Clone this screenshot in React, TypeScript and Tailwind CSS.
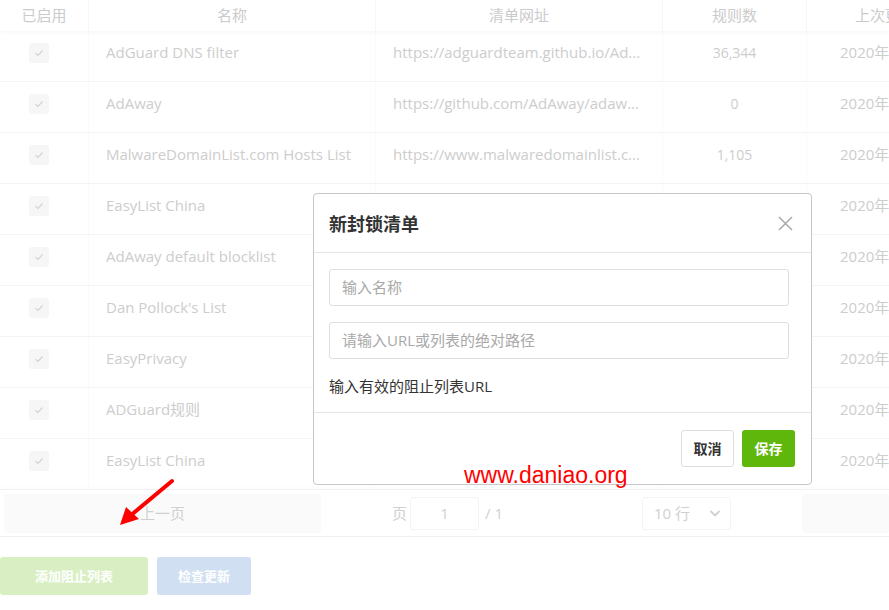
import React from 'react';

const rows = [
    { name: 'AdGuard DNS filter', url: 'https://adguardteam.github.io/Ad...', count: '36,344' },
    { name: 'AdAway', url: 'https://github.com/AdAway/adaw...', count: '0' },
    { name: 'MalwareDomainList.com Hosts List', url: 'https://www.malwaredomainlist.c...', count: '1,105' },
    { name: 'EasyList China', url: '', count: '' },
    { name: 'AdAway default blocklist', url: '', count: '' },
    { name: "Dan Pollock's List", url: '', count: '' },
    { name: 'EasyPrivacy', url: '', count: '' },
    { name: 'ADGuard规则', url: '', count: '' },
    { name: 'EasyList China', url: '', count: '' },
];

const font = { fontFamily: '"Open Sans", "Noto Sans CJK SC", sans-serif' };
const cjk = { fontFamily: '"Noto Sans CJK SC", sans-serif' };

const Check = () => (
    <div className="w-5 h-5 rounded-[3px] bg-[#f6f6f6] flex items-center justify-center">
        <svg width="12" height="12" viewBox="0 0 12 12" fill="none">
            <path d="M2.5 6.2 L5 8.5 L9.5 3.5" stroke="#d4d4d4" strokeWidth="1.2" />
        </svg>
    </div>
);

export default function App() {
    return (
        <div className="relative w-[889px] h-[610px] overflow-hidden bg-white" style={font}>
            {/* table header */}
            <div className="grid grid-cols-[89px_287px_287px_144px_1fr] h-[31px] bg-white shadow-[0_2px_4px_rgba(0,0,0,0.03)] relative z-10 text-[15px] text-[#cbcbcb]" style={cjk}>
                <div className="flex items-center justify-center border-r border-[#f7f7f7]">已启用</div>
                <div className="flex items-center justify-center border-r border-[#f7f7f7]">名称</div>
                <div className="flex items-center justify-center border-r border-[#f7f7f7]">清单网址</div>
                <div className="flex items-center justify-center border-r border-[#f7f7f7]">规则数</div>
                <div className="flex items-center pl-[48px] whitespace-nowrap">上次更新</div>
            </div>
            {rows.map((r, i) => (
                <div key={i} className="grid grid-cols-[89px_287px_287px_144px_1fr] h-[51px] border-b border-[#f3f3f3] text-[15px] text-[#cdcdcd]">
                    <div className="flex items-center pl-[29px] pb-[7px] border-r border-[#fafafa]"><Check /></div>
                    <div className="flex items-center pl-[17px] pb-[7px] whitespace-nowrap border-r border-[#fafafa]">{r.name}</div>
                    <div className="flex items-center pl-[17px] pb-[7px] whitespace-nowrap border-r border-[#fafafa]">{r.url}</div>
                    <div className="flex items-center justify-center pb-[7px] text-[14px] border-r border-[#fafafa]">{r.count}</div>
                    <div className="flex items-center pl-[33px] pb-[7px] whitespace-nowrap">2020年</div>
                </div>
            ))}
            {/* pagination */}
            <div className="flex items-center h-[47px] border-b border-[#f0f0f0] shadow-[0_-2px_4px_rgba(0,0,0,0.02)] text-[15px] text-[#d0d0d0]">
                <div className="ml-[4px] w-[317px] h-[39px] rounded-[3px] bg-[#fafafa] flex items-center justify-center">上一页</div>
                <div className="ml-[71px] flex items-center">
                    <span>页</span>
                    <div className="ml-[3px] w-[69px] h-[33px] border border-[#f3f3f3] rounded-[3px] flex items-center justify-center">1</div>
                    <span className="ml-[6px]">/ 1</span>
                </div>
                <div className="ml-[139px] w-[89px] h-[33px] border border-[#f3f3f3] rounded-[3px] flex items-center justify-between pl-[11px] pr-[8px]">
                    <span>10 行</span>
                    <svg width="14" height="14" viewBox="0 0 14 14" fill="none">
                        <path d="M2.5 5 L7 9.5 L11.5 5" stroke="#d0d0d0" strokeWidth="1.8" />
                    </svg>
                </div>
                <div className="ml-[71px] flex-1 h-[39px] rounded-[3px] bg-[#fafafa]"></div>
            </div>
            {/* buttons */}
            <div className="flex gap-[9px] mt-[20px] text-[13px] font-bold text-white" style={cjk}>
                <div className="w-[148px] h-[38px] rounded-[3px] bg-[#d9efc3] flex items-center justify-center">添加阻止列表</div>
                <div className="w-[94px] h-[38px] rounded-[3px] bg-[#d0e0f2] flex items-center justify-center">检查更新</div>
            </div>

            {/* modal */}
            <div className="absolute left-[313px] top-[193px] w-[499px] h-[292px] bg-white border border-[#c6c6c6] rounded-[4px] flex flex-col z-20">
                <div className="h-[59px] flex items-center justify-between pl-[15px] pr-[18px] border-b border-[#e6e6e6]">
                    <span className="text-[18px] font-bold text-[#333]" style={cjk}>新封锁清单</span>
                    <svg width="15" height="15" viewBox="0 0 15 15" fill="none">
                        <path d="M1 1 L14 14 M14 1 L1 14" stroke="#a8a8a8" strokeWidth="1.5" />
                    </svg>
                </div>
                <div className="flex-1 pl-[15px] pr-[22px] pt-[16px] border-b border-[#e6e6e6] text-[15px]">
                    <div className="h-[37px] border border-[#dcdfe3] rounded-[3px] flex items-center pl-[12px] text-[#a9a9a9]">输入名称</div>
                    <div className="mt-[16px] h-[37px] border border-[#dcdfe3] rounded-[3px] flex items-center pl-[12px] text-[#a9a9a9]">请输入URL或列表的绝对路径</div>
                    <div className="mt-[16px] text-[#333]">输入有效的阻止列表URL</div>
                </div>
                <div className="h-[71px] flex items-center justify-end gap-[8px] pr-[16px]">
                    <div className="w-[53px] h-[37px] border border-[#dedede] rounded-[3px] flex items-center justify-center text-[14px] font-bold text-[#333]" style={cjk}>取消</div>
                    <div className="w-[53px] h-[37px] rounded-[3px] bg-[#5fb70b] flex items-center justify-center text-[14px] font-bold text-white" style={cjk}>保存</div>
                </div>
            </div>

            {/* watermark */}
            <div className="absolute left-[464px] top-[464px] text-[23px] text-[#ff0000] leading-none z-30" style={{ fontFamily: '"Liberation Sans", sans-serif' }}>www.daniao.org</div>
            <svg className="absolute left-[112px] top-[474px] z-30" width="70" height="58" viewBox="0 0 70 58" fill="none">
                <path d="M60 7 L18 42" stroke="#ff0000" strokeWidth="4" strokeLinecap="round" />
                <path d="M8 51 L14 33 L27 45 Z" fill="#ff0000" />
            </svg>
        </div>
    );
}
